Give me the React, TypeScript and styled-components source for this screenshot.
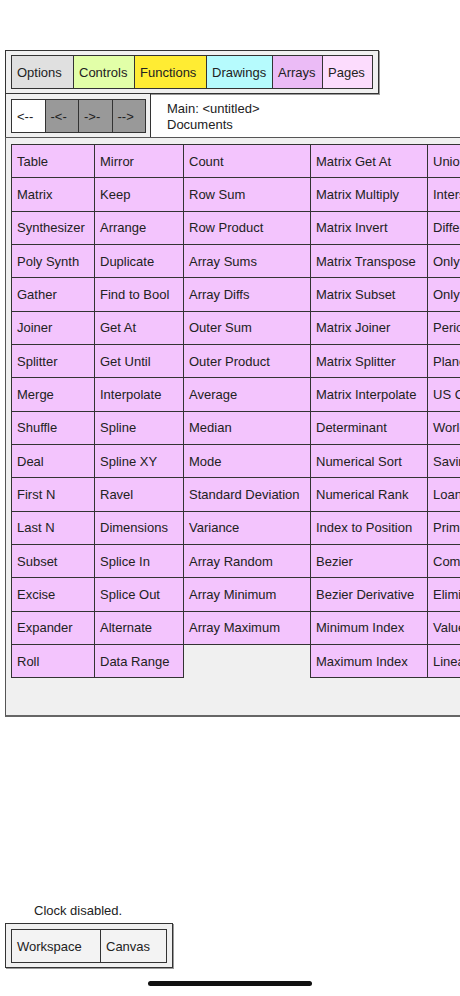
import styled, { createGlobalStyle } from 'styled-components'

const GlobalStyle = createGlobalStyle`
  html, body {
    margin: 0;
    padding: 0;
    background: #ffffff;
    overflow: hidden;
  }

  body {
    font-family: 'Liberation Sans', Arial, sans-serif;
    font-size: 13px;
    color: #222;
  }
`

const Page = styled.div`
  display: flex;
  flex-direction: column;
  width: 460px;
  min-height: 996px;
  padding-top: 50px;
  box-sizing: border-box;
  overflow: hidden;
`

const Panel = styled.div`
  box-sizing: border-box;
  border: 1px solid #333;
  box-shadow: 1px 1px 0 #9a9a9a;
  background: #f0f0f0;
`

const TabBox = styled(Panel)`
  display: flex;
  align-self: flex-start;
  margin-left: 5px;
  padding: 4px 5px;
`

const Cell = styled.div<{ $width?: number; $bg?: string }>`
  box-sizing: border-box;
  display: flex;
  align-items: center;
  flex: none;
  width: ${p => (p.$width ? `${p.$width}px` : 'auto')};
  height: 34px;
  padding-left: 5px;
  border: 1px solid #333;
  background: ${p => p.$bg ?? '#f3f3f3'};
  white-space: nowrap;
  overflow: hidden;

  & + & {
    margin-left: -1px;
  }
`

const NavRow = styled.div`
  display: flex;
  margin-top: -1px;
`

const NavBox = styled(Panel)`
  display: flex;
  margin-left: 5px;
  padding: 5px 4px 4px 5px;
  box-shadow: none;
`

const NavButton = styled(Cell)`
  width: 34.5px;
`

const Heading = styled.div`
  display: flex;
  flex-direction: column;
  justify-content: center;
  padding: 2px 0 0 16px;
  line-height: 16px;
`

const Frame = styled(Panel)`
  display: flex;
  align-items: flex-start;
  width: 620px;
  margin: -1px 0 0 5px;
  padding: 6px 0 37px 5px;
  border-color: #555;
  border-bottom: 2px solid #666;
  box-shadow: none;
`

const Column = styled.div<{ $width: number }>`
  display: flex;
  flex-direction: column;
  flex: none;
  width: ${p => p.$width}px;

  & + & {
    margin-left: -1px;
  }
`

const Item = styled.div`
  box-sizing: border-box;
  display: flex;
  align-items: center;
  height: 34.33px;
  padding-left: 5px;
  border: 1px solid #333;
  background: #f3c4fd;
  white-space: nowrap;
  overflow: hidden;

  & + & {
    margin-top: -1px;
  }
`

const Footer = styled.div`
  display: flex;
  flex-direction: column;
  margin-top: auto;
  padding-bottom: 10px;
`

const ClockText = styled.div`
  margin: 0 0 4px 34px;
  line-height: 16px;
`

const ViewBox = styled(Panel)`
  display: flex;
  align-self: flex-start;
  margin-left: 5px;
  padding: 5px 5px 4px;
`

const HomeBar = styled.div`
  width: 164px;
  height: 5px;
  margin: 13px 0 0 148px;
  border-radius: 3px;
  background: #111;
`

const tabs = [
  { label: 'Options', width: 63, bg: '#e0e0e0' },
  { label: 'Controls', width: 62, bg: '#e2ffa8' },
  { label: 'Functions', width: 73, bg: '#ffec33' },
  { label: 'Drawings', width: 67, bg: '#b6fbfd' },
  { label: 'Arrays', width: 51, bg: '#ebbbf6' },
  { label: 'Pages', width: 51, bg: '#fcdcfd' },
]

const navButtons = [
  { label: '<--', bg: '#ffffff' },
  { label: '-<-', bg: '#999999' },
  { label: '->-', bg: '#999999' },
  { label: '-->', bg: '#999999' },
]

const columns = [
  {
    width: 84,
    items: ['Table', 'Matrix', 'Synthesizer', 'Poly Synth', 'Gather', 'Joiner', 'Splitter', 'Merge',
      'Shuffle', 'Deal', 'First N', 'Last N', 'Subset', 'Excise', 'Expander', 'Roll'],
  },
  {
    width: 90,
    items: ['Mirror', 'Keep', 'Arrange', 'Duplicate', 'Find to Bool', 'Get At', 'Get Until',
      'Interpolate', 'Spline', 'Spline XY', 'Ravel', 'Dimensions', 'Splice In', 'Splice Out',
      'Alternate', 'Data Range'],
  },
  {
    width: 128,
    items: ['Count', 'Row Sum', 'Row Product', 'Array Sums', 'Array Diffs', 'Outer Sum',
      'Outer Product', 'Average', 'Median', 'Mode', 'Standard Deviation', 'Variance',
      'Array Random', 'Array Minimum', 'Array Maximum'],
  },
  {
    width: 118,
    items: ['Matrix Get At', 'Matrix Multiply', 'Matrix Invert', 'Matrix Transpose', 'Matrix Subset',
      'Matrix Joiner', 'Matrix Splitter', 'Matrix Interpolate', 'Determinant', 'Numerical Sort',
      'Numerical Rank', 'Index to Position', 'Bezier', 'Bezier Derivative', 'Minimum Index',
      'Maximum Index'],
  },
  {
    width: 140,
    items: ['Union', 'Intersection', 'Difference', 'Only In First', 'Only In Second',
      'Periodic Table', 'Planets', 'US Cities', 'World Cities', 'Savings', 'Loan', 'Primes',
      'Combinations', 'Eliminate', 'Value Lookup', 'Linear Fit'],
  },
]

function App() {
  return (
    <Page>
      <GlobalStyle />
      <TabBox>
        {tabs.map(tab => (
          <Cell key={tab.label} $width={tab.width} $bg={tab.bg}>
            {tab.label}
          </Cell>
        ))}
      </TabBox>

      <NavRow>
        <NavBox>
          {navButtons.map(btn => (
            <NavButton key={btn.label} $bg={btn.bg}>
              {btn.label}
            </NavButton>
          ))}
        </NavBox>
        <Heading>
          <div>Main: &lt;untitled&gt;</div>
          <div>Documents</div>
        </Heading>
      </NavRow>

      <Frame>
        {columns.map((col, i) => (
          <Column key={i} $width={col.width}>
            {col.items.map(name => (
              <Item key={name}>{name}</Item>
            ))}
          </Column>
        ))}
      </Frame>

      <Footer>
        <ClockText>Clock disabled.</ClockText>
        <ViewBox>
          <Cell $width={90}>Workspace</Cell>
          <Cell $width={67}>Canvas</Cell>
        </ViewBox>
        <HomeBar />
      </Footer>
    </Page>
  )
}

export default App
